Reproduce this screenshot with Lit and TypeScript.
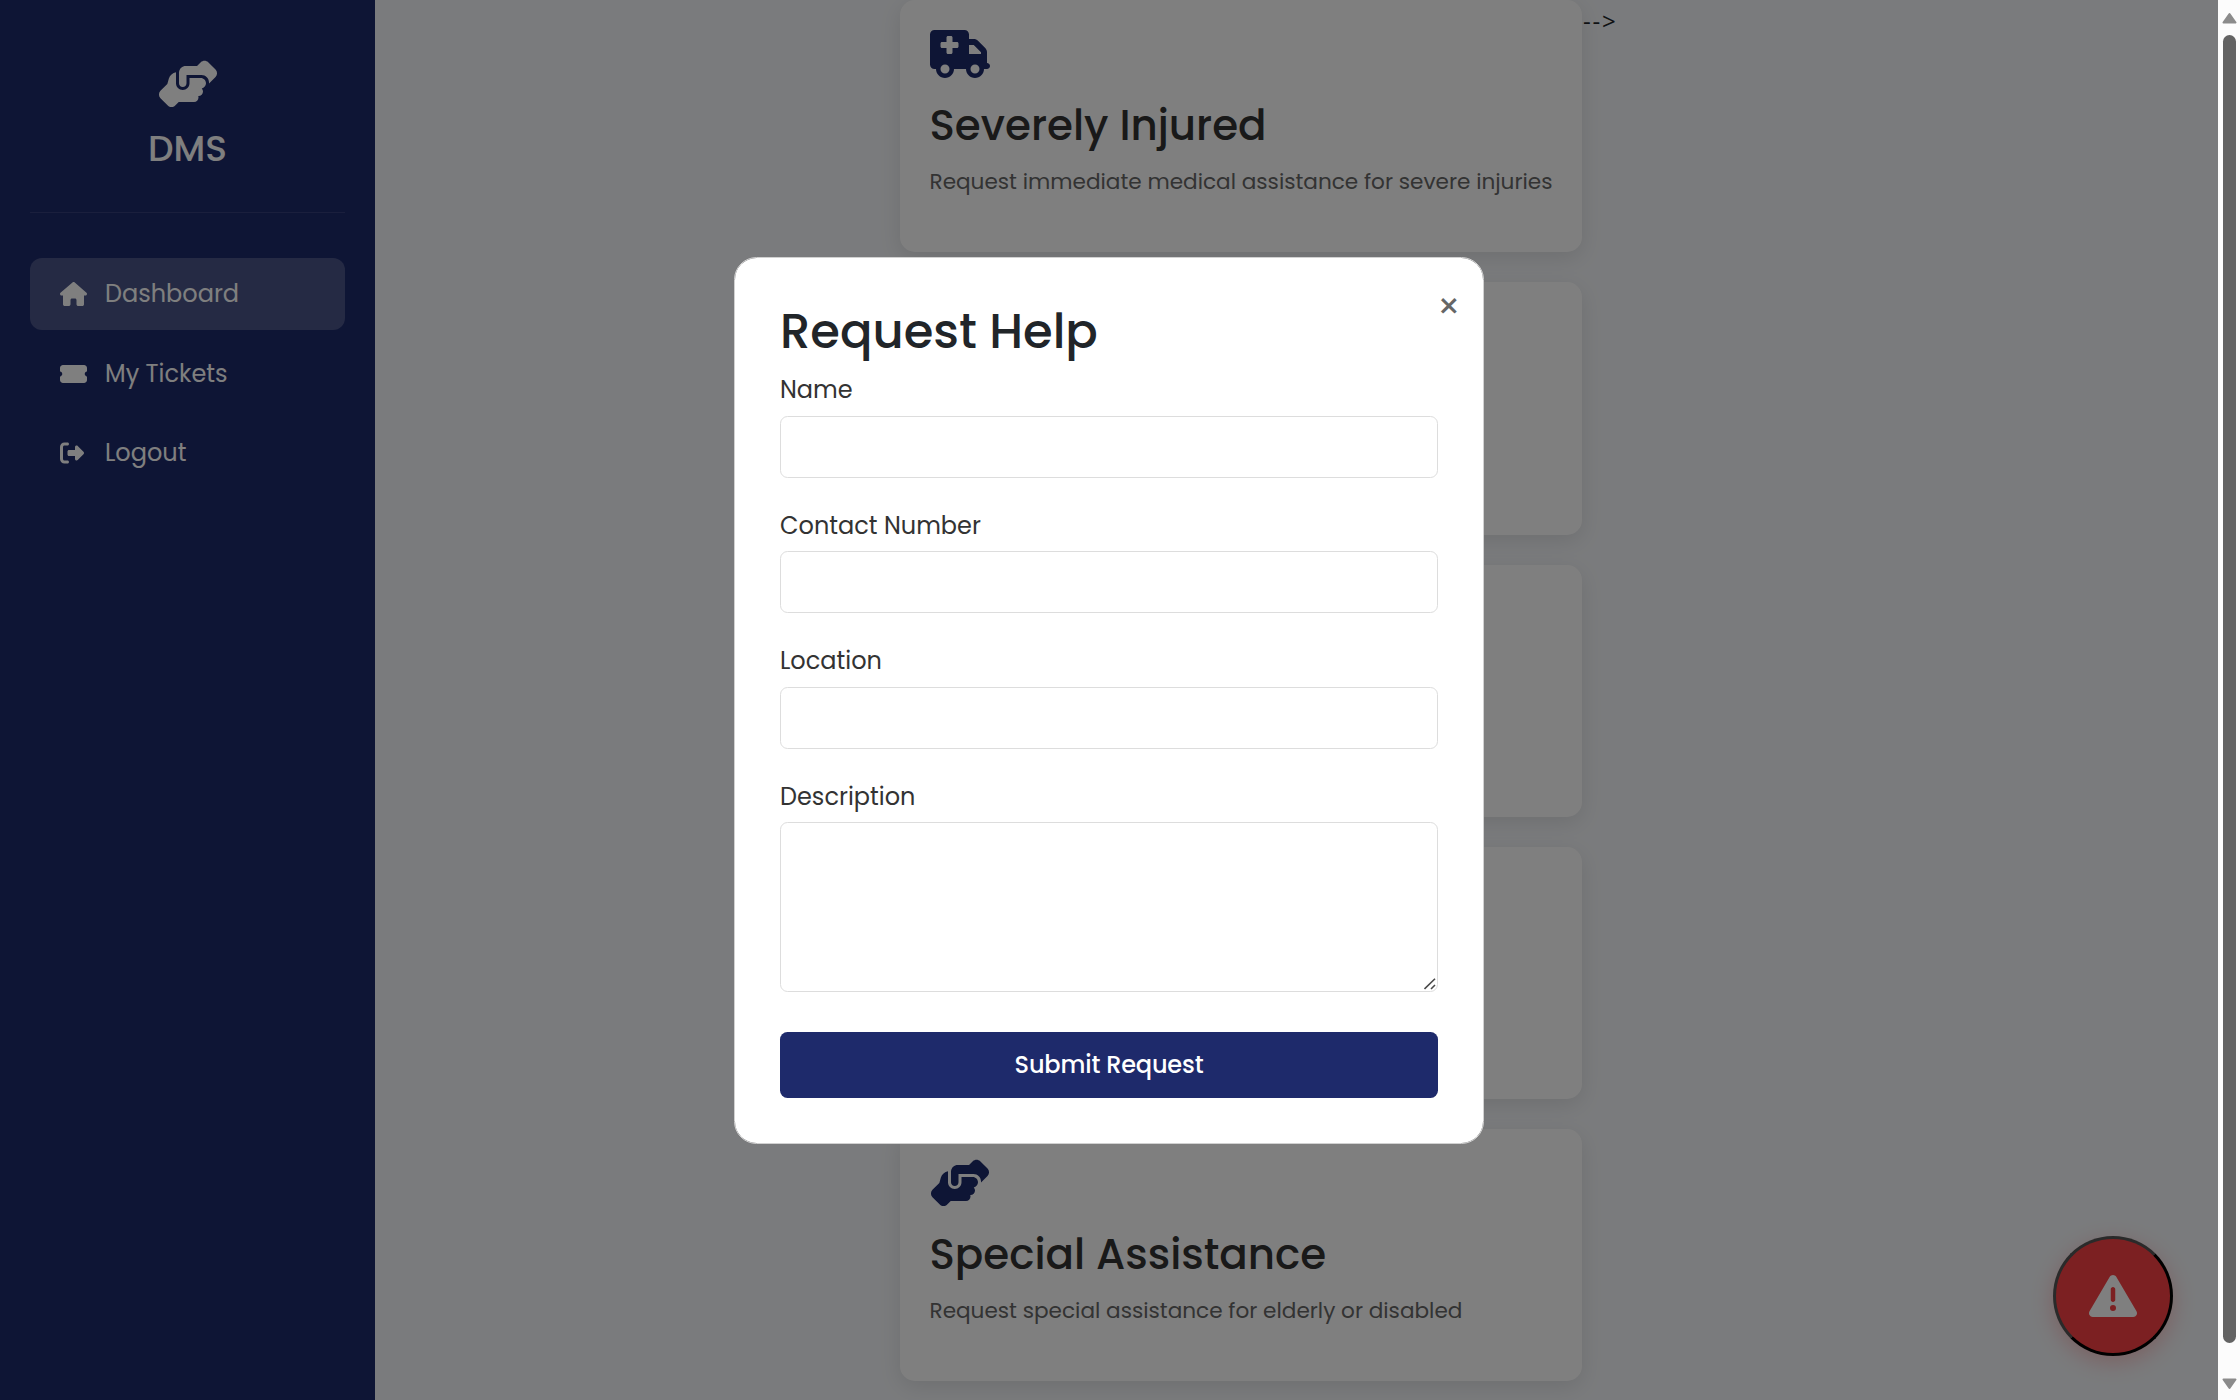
import { LitElement, html, css, svg } from 'lit';
import { customElement } from 'lit/decorators.js';
import { classMap } from 'lit/directives/class-map.js';

type Icon = { w: number; d: string };

const ICONS: Record<string, Icon> = {
  house: { w: 576, d: 'M575.8 255.5c0 18-15 32.1-32 32.1l-32 0 .7 160.2c0 2.7-.2 5.4-.5 8.1l0 16.2c0 22.1-17.9 40-40 40l-16 0c-1.1 0-2.2 0-3.3-.1c-1.4 .1-2.8 .1-4.2 .1L416 512l-24 0c-22.1 0-40-17.9-40-40l0-24 0-64c0-17.7-14.3-32-32-32l-64 0c-17.7 0-32 14.3-32 32l0 64 0 24c0 22.1-17.9 40-40 40l-24 0-31.9 0c-1.5 0-3-.1-4.5-.2c-1.2 .1-2.4 .2-3.6 .2l-16 0c-22.1 0-40-17.9-40-40l0-112c0-.9 0-1.9 .1-2.8l0-69.7-32 0c-18 0-32-14-32-32.1c0-9 3-17 10-24L266.4 8c7-7 15-8 22-8s15 2 21 7L564.8 231.5c8 7 12 15 11 24z' },
  ticket: { w: 576, d: 'M0 128C0 92.7 28.7 64 64 64l448 0c35.3 0 64 28.7 64 64l0 64c0 8.8-7.4 15.7-15.7 18.6C541.5 217.1 528 235 528 256s13.5 38.9 32.3 45.4c8.3 2.9 15.7 9.8 15.7 18.6l0 64c0 35.3-28.7 64-64 64L64 448c-35.3 0-64-28.7-64-64l0-64c0-8.8 7.4-15.7 15.7-18.6C34.5 294.9 48 277 48 256s-13.5-38.9-32.3-45.4C7.4 207.7 0 200.8 0 192l0-64z' },
  logout: { w: 512, d: 'M377.9 105.9L500.7 228.7c7.2 7.2 11.3 17.1 11.3 27.3s-4.1 20.1-11.3 27.3L377.9 406.1c-6.4 6.4-15 9.9-24 9.9c-18.7 0-33.9-15.2-33.9-33.9l0-62.1-128 0c-17.7 0-32-14.3-32-32l0-64c0-17.7 14.3-32 32-32l128 0 0-62.1c0-18.7 15.2-33.9 33.9-33.9c9 0 17.6 3.6 24 9.9zM160 96L96 96c-17.7 0-32 14.3-32 32l0 256c0 17.7 14.3 32 32 32l64 0c17.7 0 32 14.3 32 32s-14.3 32-32 32l-64 0c-53 0-96-43-96-96L0 128C0 75 43 32 96 32l64 0c17.7 0 32 14.3 32 32s-14.3 32-32 32z' },
  warning: { w: 512, d: 'M256 32c14.2 0 27.3 7.5 34.5 19.8l216 368c7.3 12.4 7.3 27.7 .2 40.1S486.3 480 472 480L40 480c-14.3 0-27.6-7.7-34.7-20.1s-7-27.8 .2-40.1l216-368C228.7 39.5 241.8 32 256 32zm0 128c-13.3 0-24 10.7-24 24l0 112c0 13.3 10.7 24 24 24s24-10.7 24-24l0-112c0-13.3-10.7-24-24-24zm32 224a32 32 0 1 0 -64 0 32 32 0 1 0 64 0z' },
  ambulance: { w: 640, d: 'M0 48C0 21.5 21.5 0 48 0L368 0c26.5 0 48 21.5 48 48l0 48 50.7 0c17 0 33.3 6.7 45.3 18.7L589.3 192c12 12 18.7 28.3 18.7 45.3l0 18.7 0 32 0 64c17.7 0 32 14.3 32 32s-14.3 32-32 32l-32 0c0 53-43 96-96 96s-96-43-96-96l-128 0c0 53-43 96-96 96s-96-43-96-96l-16 0c-26.5 0-48-21.5-48-48L0 48zM416 256l128 0 0-18.7L466.7 160 416 160l0 96zM160 464a48 48 0 1 0 0-96 48 48 0 1 0 0 96zm368-48a48 48 0 1 0 -96 0 48 48 0 1 0 96 0zM176 80l0 48-48 0c-8.8 0-16 7.2-16 16l0 32c0 8.8 7.2 16 16 16l48 0 0 48c0 8.8 7.2 16 16 16l32 0c8.8 0 16-7.2 16-16l0-48 48 0c8.8 0 16-7.2 16-16l0-32c0-8.8-7.2-16-16-16l-48 0 0-48c0-8.8-7.2-16-16-16l-32 0c-8.8 0-16 7.2-16 16z' },
  hands: { w: 640, d: 'M544 248l0 3.3 69.7-69.7c21.9-21.9 21.9-57.3 0-79.2L535.6 24.4c-21.9-21.9-57.3-21.9-79.2 0L416.3 64.5c-2.7-.3-5.5-.5-8.3-.5L296 64c-37.1 0-67.6 28-71.6 64l-.4 0 0 120c0 22.1 17.9 40 40 40s40-17.9 40-40l0-72c0 0 0-.1 0-.1l0-15.9 16 0 136 0c0 0 0 0 .1 0l7.9 0c44.2 0 80 35.8 80 80l0 8zM336 192l0 56c0 39.8-32.2 72-72 72s-72-32.2-72-72l0-118.6c-35.9 6.2-65.8 32.3-76 68.2L99.5 255.2 26.3 328.4c-21.9 21.9-21.9 57.3 0 79.2l78.1 78.1c21.9 21.9 57.3 21.9 79.2 0l37.7-37.7c.9 0 1.8 .1 2.7 .1l160 0c26.5 0 48-21.5 48-48c0-5.6-1-11-2.7-16l2.7 0c26.5 0 48-21.5 48-48c0-12.8-5-24.4-13.2-33c25.7-5 45.1-27.6 45.2-54.8l0-.4c-.1-30.8-25.1-55.8-56-55.8c0 0 0 0 0 0l-120 0z' },
};

const icon = (name: string, size: number) => {
  const i = ICONS[name];
  return html`<svg class="icon" width=${(i.w / 512) * size} height=${size} viewBox="0 0 ${i.w} 512" fill="currentColor" aria-hidden="true">${svg`<path d=${i.d}></path>`}</svg>`;
};

const base = css`
  *, *::before, *::after { box-sizing: border-box; }
  h1, h2, h3, p { margin: 0; }
  .icon { display: block; flex: none; }
`;

@customElement('dms-sidebar')
class DmsSidebar extends LitElement {
  static styles = [base, css`
    :host { display: flex; flex-direction: column; flex: none; width: 375px; padding: 30px; background: #1d2a6b; color: #fff; }
    .brand { display: flex; flex-direction: column; align-items: center; height: 183px; padding-top: 30px; border-bottom: 1px solid rgba(255, 255, 255, 0.1); }
    .name { margin-top: 19px; font-size: 36px; line-height: 43px; font-weight: 500; }
    .nav { display: flex; flex-direction: column; gap: 7.5px; margin-top: 45px; }
    .link { display: flex; align-items: center; gap: 15px; padding: 18px 30px; border-radius: 12px; font-size: 24px; line-height: 36px; }
    .active { background: rgba(255, 255, 255, 0.2); }
    .slot { width: 30px; }
  `];
  render() {
    const links = [['house', 'Dashboard'], ['ticket', 'My Tickets'], ['logout', 'Logout']];
    return html`
      <div class="brand">${icon('hands', 48)}<div class="name">DMS</div></div>
      <nav class="nav">
        ${links.map(([i, t], n) => html`<a class=${classMap({ link: true, active: n === 0 })}><span class="slot">${icon(i, 24)}</span><span>${t}</span></a>`)}
      </nav>`;
  }
}

@customElement('help-card')
class HelpCard extends LitElement {
  static properties = { icon: {}, heading: {}, text: {} };
  declare icon?: string;
  declare heading?: string;
  declare text?: string;
  static styles = [base, css`
    :host { display: block; box-sizing: border-box; flex: none; width: 682px; height: 252.3px; padding: 30px; border-radius: 15px; background: #fff; box-shadow: 0 6px 22.5px rgba(0, 0, 0, 0.1); }
    .icon { color: #1d2a6b; }
    .title { margin-top: 22.5px; font-size: 42px; line-height: 50.4px; font-weight: 500; color: #333; }
    .text { margin-top: 15px; font-size: 21.6px; line-height: 32.4px; color: #666; white-space: nowrap; }
  `];
  render() {
    return this.heading
      ? html`${icon(this.icon!, 48)}<h3 class="title">${this.heading}</h3><p class="text">${this.text}</p>`
      : html``;
  }
}

@customElement('request-modal')
class RequestModal extends LitElement {
  static styles = [base, css`
    :host { display: block; position: relative; box-sizing: border-box; width: 750px; padding: 45px; border: 1px solid #d1d1d1; border-radius: 22.5px; background: #fff; background-clip: padding-box; }
    .title { font-size: 48px; line-height: 57.6px; font-weight: 500; color: #212529; margin-bottom: 11.8px; }
    .form { display: flex; flex-direction: column; gap: 30px; }
    .group { display: flex; flex-direction: column; gap: 7.5px; position: relative; }
    .label { font-size: 24px; line-height: 36px; color: #333; }
    .input { display: block; width: 100%; height: 62px; padding: 12px; border: 1px solid #ddd; border-radius: 7.5px; background: #fff; font: inherit; outline: none; resize: none; }
    .area { height: 170px; }
    .grip { position: absolute; right: 2px; bottom: 2px; }
    .submit { margin-top: 9.8px; height: 66px; border: none; border-radius: 7.5px; background: #1e2a6b; color: #fff; font: 500 24px/36px Poppins, sans-serif; letter-spacing: -0.17px; }
    .close { position: absolute; top: 22px; right: 22.5px; font-size: 36px; line-height: 54px; color: #666; }
  `];
  render() {
    return html`
      <span class="close">×</span>
      <h2 class="title">Request Help</h2>
      <div class="form">
        ${['Name', 'Contact Number', 'Location'].map((l) => html`<label class="group"><span class="label">${l}</span><input class="input" /></label>`)}
        <label class="group">
          <span class="label">Description</span>
          <textarea class="input area"></textarea>
          <svg class="grip" width="12" height="12" viewBox="0 0 12 12" stroke="#4a4a4a" stroke-width="1.6" fill="none"><path d="M.5 11 11 .8M7 11l4-4"></path></svg>
        </label>
        <button class="submit">Submit Request</button>
      </div>`;
  }
}

@customElement('app-root')
class AppRoot extends LitElement {
  static styles = [base, css`
    :host { display: flex; width: 2240px; height: 1400px; overflow: hidden; font-family: Poppins, "Open Sans", sans-serif; }
    .page { position: relative; display: flex; flex: 1; background: #f5f7fa; overflow: hidden; }
    .main { display: flex; flex: 1; align-items: flex-start; padding-left: 524.5px; }
    .cards { display: flex; flex-direction: column; gap: 30px; }
    .stray { font: 24px/36px "Open Sans", sans-serif; letter-spacing: 1.8px; margin: 3px 0 0 1.5px; color: #212529; }
    .fab { position: absolute; right: 45px; bottom: 44px; width: 120px; height: 120px; display: flex; align-items: center; justify-content: center; border: 3px outset #000; border-radius: 50%; background: #f94144; color: #fff; padding: 0; box-shadow: 0 6px 22.5px rgba(249, 65, 68, 0.3); }
    .overlay { position: absolute; inset: 0; padding-top: 1px; display: flex; align-items: center; justify-content: center; background: rgba(0, 0, 0, 0.5); }
    .scroll { display: flex; flex-direction: column; align-items: center; flex: none; width: 22px; padding: 12px 0 10px; background: #fcfcfc; color: #8b8b8b; }
    .thumb { flex: 1; width: 13px; margin: 11px 0 35px 1px; border-radius: 6.5px; background: #636363; }
    .tri { display: block; margin-left: 1px; }
  `];
  render() {
    return html`
      <div class="page">
        <dms-sidebar></dms-sidebar>
        <main class="main">
          <div class="cards">
            <help-card .icon=${'ambulance'} .heading=${'Severely Injured'} .text=${'Request immediate medical assistance for severe injuries'}></help-card>
            <help-card></help-card>
            <help-card></help-card>
            <help-card></help-card>
            <help-card .icon=${'hands'} .heading=${'Special Assistance'} .text=${'Request special assistance for elderly or disabled'}></help-card>
          </div>
          <span class="stray">--&gt;</span>
        </main>
        <button class="fab">${icon('warning', 48)}</button>
        <div class="overlay"><request-modal></request-modal></div>
      </div>
      <div class="scroll">
        <svg class="tri" width="15" height="12" viewBox="0 0 15 12" fill="currentColor" stroke="currentColor" stroke-width="2" stroke-linejoin="round"><path d="M7.5 2 13.5 10.5H1.5z"></path></svg>
        <div class="thumb"></div>
        <svg class="tri" width="15" height="12" viewBox="0 0 15 12" fill="currentColor" stroke="currentColor" stroke-width="2" stroke-linejoin="round"><path d="M7.5 10 13.5 1.5H1.5z"></path></svg>
      </div>`;
  }
}
